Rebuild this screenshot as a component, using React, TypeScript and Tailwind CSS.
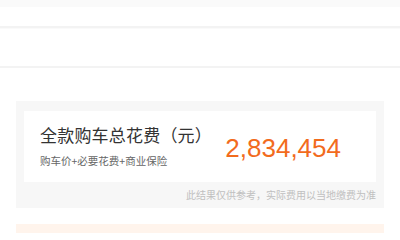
import * as React from "react";

const CJK = "font-['Microsoft_YaHei','Noto_Sans_CJK_SC',sans-serif]";

function Row({ h }: { h: string }) {
  return <div className={`${h} bg-white border-b-2 border-[#f3f3f3]`} />;
}

export default function App() {
  return (
    <div className={`w-[400px] h-[233px] overflow-hidden bg-white ${CJK}`}>
      <div className="h-[7px] bg-[#fafafa]" />
      <Row h="h-[21px]" />
      <div className="h-[40px] bg-white border-b-2 border-[#f3f3f3] border-t border-t-[#fafafa]" />
      <div className="pt-[33px] px-4">
        <div className="bg-[#f7f7f7] px-2 pt-[10px] pb-[6px]">
          <div className="bg-white h-[71px] flex items-center pl-4 pr-[35px]">
            <div className="flex flex-col">
              <div className="text-[17px] leading-[20px] text-[#333] tracking-[0.2px]">全款购车总花费（元）</div>
              <div className="text-[10.5px] leading-[14px] text-[#666] mt-[9px]">
                购车价+必要花费+商业保险
              </div>
            </div>
            <div className="ml-auto pt-[2px] text-[26px] leading-[30px] text-[#f26b1d] font-['Liberation_Sans',sans-serif]">
              2,834,454
            </div>
          </div>
          <div className="text-right text-[10px] leading-[14px] text-[#c0c0c0] mt-[6px]">
            此结果仅供参考，实际费用以当地缴费为准
          </div>
        </div>
        <div className="mt-4 h-[20px] bg-[#fff4ec]" />
      </div>
    </div>
  );
}
